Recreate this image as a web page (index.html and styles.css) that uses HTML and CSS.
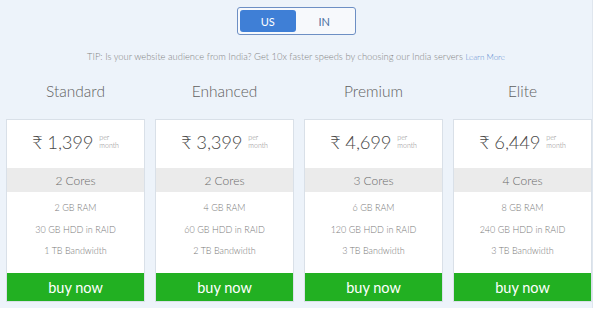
FILE: index.html
```html
<!DOCTYPE html>
<html>
<head>
<meta charset="utf-8">
<link rel="stylesheet" href="styles.css">
</head>
<body>
<div class="panel">
  <div class="toggle">
    <span class="opt active">US</span>
    <span class="opt">IN</span>
  </div>
  <p class="tip">TIP: Is your website audience from India? Get 10x faster speeds by choosing our India servers <a class="learn">Learn More</a></p>
  <div class="plans">
    <div class="plan">
      <div class="name">Standard</div>
      <div class="card">
        <div class="price"><span class="amt">₹ 1,399</span><span class="per">per<br>month</span></div>
        <div class="cores">2 Cores</div>
        <ul class="feats"><li>2 GB RAM</li><li>30 GB HDD in RAID</li><li>1 TB Bandwidth</li></ul>
        <div class="buy">buy now</div>
      </div>
    </div>
    <div class="plan">
      <div class="name">Enhanced</div>
      <div class="card">
        <div class="price"><span class="amt">₹ 3,399</span><span class="per">per<br>month</span></div>
        <div class="cores">2 Cores</div>
        <ul class="feats"><li>4 GB RAM</li><li>60 GB HDD in RAID</li><li>2 TB Bandwidth</li></ul>
        <div class="buy">buy now</div>
      </div>
    </div>
    <div class="plan">
      <div class="name">Premium</div>
      <div class="card">
        <div class="price"><span class="amt">₹ 4,699</span><span class="per">per<br>month</span></div>
        <div class="cores">3 Cores</div>
        <ul class="feats"><li>6 GB RAM</li><li>120 GB HDD in RAID</li><li>3 TB Bandwidth</li></ul>
        <div class="buy">buy now</div>
      </div>
    </div>
    <div class="plan">
      <div class="name">Elite</div>
      <div class="card">
        <div class="price"><span class="amt">₹ 6,449</span><span class="per">per<br>month</span></div>
        <div class="cores">4 Cores</div>
        <ul class="feats"><li>8 GB RAM</li><li>240 GB HDD in RAID</li><li>3 TB Bandwidth</li></ul>
        <div class="buy">buy now</div>
      </div>
    </div>
  </div>
</div>
</body>
</html>
```
FILE: styles.css
```css
html, body {
  margin: 0;
  padding: 0;
  background: #ffffff;
}
body {
  font-family: Lato, "Noto Sans", "DejaVu Sans", sans-serif;
  font-weight: 300;
}
.panel {
  width: 593px;
  height: 308px;
  background: #edf3fa;
  border-right: 1px solid #dfe6ee;
  box-sizing: border-box;
  display: flex;
  flex-direction: column;
  align-items: center;
  padding-top: 7px;
}
.toggle {
  width: 119px;
  height: 28px;
  box-sizing: border-box;
  border: 1px solid #6d8fc4;
  border-radius: 3px;
  background: #f7f9fc;
  padding: 2px;
  display: flex;
}
.opt {
  flex: 1;
  display: flex;
  align-items: center;
  justify-content: center;
  font-size: 11px;
  font-weight: 400;
  color: #4d6f9e;
  border-radius: 3px;
}
.opt.active {
  background: #3f7fd6;
  color: #ffffff;
}
.tip {
  margin: 16px 0 0;
  font-size: 9.4px;
  color: #858585;
  line-height: 12px;
}
.learn {
  color: #5b8bd0;
  font-size: 8px;
}
.plans {
  display: flex;
  gap: 10px;
  align-self: stretch;
  padding-left: 6px;
  margin-top: 18px;
}
.plan {
  width: 139px;
  display: flex;
  flex-direction: column;
}
.name {
  text-align: center;
  font-size: 15.5px;
  color: #606060;
  line-height: 20px;
  height: 38px;
}
.card {
  background: #ffffff;
  border: 1px solid #d9e0e8;
  height: 183px;
  box-sizing: border-box;
  display: flex;
  flex-direction: column;
}
.price {
  height: 48px;
  display: flex;
  justify-content: center;
  align-items: flex-start;
  padding-top: 11px;
  box-sizing: border-box;
  color: #4a4a4a;
}
.amt {
  font-size: 18.5px;
  font-weight: 300;
  line-height: 22px;
  letter-spacing: -0.2px;
}
.per {
  font-size: 7px;
  line-height: 8px;
  color: #888;
  margin-left: 6px;
  margin-top: 2px;
}
.cores {
  height: 24px;
  background: #ebebeb;
  display: flex;
  align-items: center;
  justify-content: center;
  font-size: 12px;
  color: #6a6a6a;
}
.feats {
  list-style: none;
  margin: 0;
  padding: 5px 0 0;
  flex: 1;
}
.feats li {
  text-align: center;
  font-size: 9px;
  color: #7a7a7a;
  line-height: 21.5px;
}
.buy {
  height: 28px;
  background: #22b022;
  color: #ffffff;
  display: flex;
  align-items: center;
  justify-content: center;
  font-size: 14.5px;
  font-weight: 400;
}
```
